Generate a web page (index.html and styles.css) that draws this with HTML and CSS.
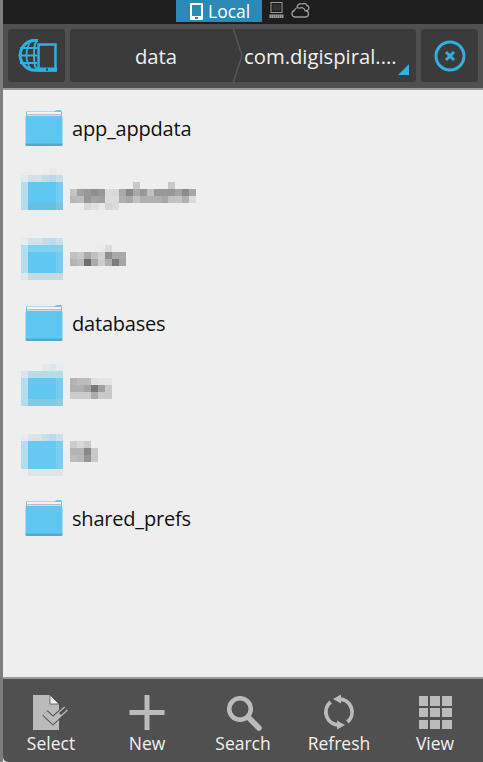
FILE: index.html
```html
<!DOCTYPE html>
<html lang="en">
<head>
<meta charset="utf-8">
<title>Local files</title>
<link rel="stylesheet" href="styles.css">
</head>
<body>
<svg class="defs" width="0" height="0">
  <symbol id="folder" viewBox="0 0 42 65">
    <path d="M5 17h30l2-1.500 2 .5 2 1v6H5z" fill="#7cc9ea"/>
    <path d="M5 14.500h28l3-1.500h4l1 2v6H5z" fill="#6cc6ee"/>
    <path d="M6 15h34v4H6z" fill="#f4f4f4"/>
    <path d="M6 17h34v1.500H6z" fill="#bdbdbd"/>
    <path d="M4.500 19.500h36.500l.5 1V47l-.5 1H5l-.5-1z" fill="#5fc8f2"/>
    <path d="M4.500 46.500h37V48l-.5 1H5l-.5-1z" fill="#5aa6c8"/>
  </symbol>
</svg>
<div class="app">
  <div class="status">
    <div class="tab">
      <svg class="tab-icon" width="13" height="17" viewBox="0 0 13 17"><path d="M1 0h11a1 1 0 0 1 1 1v15a1 1 0 0 1-1 1H1a1 1 0 0 1-1-1V1a1 1 0 0 1 1-1zM2 2v11h9V2z" fill="#fff" fill-rule="evenodd"/><rect x="5" y="14" width="3" height="2" fill="#2a8ab5"/></svg>
      <span>Local</span>
    </div>
    <svg class="st-pc" width="15" height="17" viewBox="0 0 15 17" fill="none" stroke="#999"><rect x="2" y=".5" width="11" height="10" stroke-width="1"/><path d="M3.500 2.500h8v6h-8z" fill="#333" stroke="none"/><path d="M.5 12.500h14v3.500H.5z" fill="#999" stroke="none"/><path d="M2 14h11M2 15h11" stroke="#333" stroke-width=".5" stroke-dasharray="1 1"/></svg>
    <svg class="st-cloud" width="19" height="16" viewBox="0 0 19 16" fill="none" stroke="#999" stroke-width="1.300"><path d="M4 15a3.300 3.300 0 0 1-.5-6.500C4 6 6.500 5 8.500 6.300 10 5 13.500 5.500 14 8.500a3.300 3.300 0 0 1 1 6.500z"/><path d="M6 5c.5-2.500 3-4 5.500-3 1.500-1 4-.5 4.500 1.500 2 .5 2.500 3 1 4.500-.5.500-1.500 1-2.500 1"/></svg>
  </div>
  <header class="toolbar">
    <div class="cell">
      <svg width="40" height="33" viewBox="0 0 40 33" fill="none" stroke="#2fb0e0" stroke-width="1.800">
        <path d="M21 1.500A15 15 0 1 0 21 31" stroke-width="3"/>
        <path d="M14 2c-6 7-6 21 0 28M21 2c-3 0-4 4-4 14s1 14 4 14M3 9h17M1.500 16.500H20M3 24h17"/>
        <rect x="21.500" y="5.500" width="17" height="26" fill="#3b3b3b" stroke-width="2.500"/>
        <rect x="20" y="28.500" width="20" height="4" fill="#2fb0e0" stroke="none"/>
        <rect x="29" y="29.500" width="2" height="2" fill="#333" stroke="none"/>
      </svg>
    </div>
    <div class="crumbs">
      <span class="crumb-a">data</span>
      <svg class="chev" width="11" height="55" viewBox="0 0 11 55" fill="none" stroke="#565656" stroke-width="1.500"><path d="M1 0l9 27.500L1 55"/></svg>
      <span class="crumb-b">com.digispiral....</span>
      <span class="corner"></span>
    </div>
    <div class="cell">
      <svg width="32" height="32" viewBox="0 0 32 32" fill="none" stroke="#2fb0e0"><circle cx="16" cy="16" r="14" stroke-width="3"/><path d="M12 12l8 8M20 12l-8 8" stroke-width="3"/></svg>
    </div>
  </header>
  <main class="list">
    <div class="row"><svg class="ficon" width="42" height="65"><use href="#folder"/></svg><span class="name">app_appdata</span></div>
    <div class="row">
      <svg class="mosaic" width="175" height="65" viewBox="21 162 175 65" shape-rendering="crispEdges">
        <rect x="42" y="168" width="7" height="7" fill="#ececec"/><rect x="49" y="168" width="7" height="7" fill="#e8e8e8"/><rect x="56" y="168" width="7" height="7" fill="#ececec"/>
        <rect x="21" y="175" width="7" height="7" fill="#dcebf0"/><rect x="28" y="175" width="7" height="7" fill="#cfe0e8"/><rect x="35" y="175" width="7" height="7" fill="#d2e2ea"/><rect x="42" y="175" width="7" height="7" fill="#c2dde8"/><rect x="49" y="175" width="7" height="7" fill="#b4dbec"/><rect x="56" y="175" width="7" height="7" fill="#c4dfe8"/>
        <rect x="21" y="182" width="7" height="28" fill="#b2dded"/><rect x="28" y="182" width="28" height="21" fill="#5fc8f2"/><rect x="56" y="182" width="7" height="21" fill="#78ccf0"/>
        <rect x="28" y="203" width="28" height="7" fill="#66c0e4"/><rect x="56" y="203" width="7" height="7" fill="#7cc4e2"/>
        <rect x="133" y="182" width="7" height="7" fill="#c8c8c8"/><rect x="168" y="182" width="7" height="7" fill="#c8c8c8"/>
        <rect x="70" y="189" width="7" height="7" fill="#c4c4c4"/><rect x="77" y="189" width="7" height="7" fill="#a0a0a0"/><rect x="84" y="189" width="7" height="7" fill="#989898"/><rect x="91" y="189" width="7" height="7" fill="#909090"/><rect x="98" y="189" width="7" height="7" fill="#989898"/><rect x="105" y="189" width="7" height="7" fill="#dcdcdc"/><rect x="112" y="189" width="7" height="7" fill="#d8d8d8"/><rect x="119" y="189" width="7" height="7" fill="#a8a8a8"/><rect x="126" y="189" width="7" height="7" fill="#888"/><rect x="133" y="189" width="7" height="7" fill="#a8a8a8"/><rect x="140" y="189" width="7" height="7" fill="#989898"/><rect x="147" y="189" width="7" height="7" fill="#c0c0c0"/><rect x="154" y="189" width="21" height="7" fill="#989898"/><rect x="175" y="189" width="7" height="7" fill="#a4a4a4"/><rect x="182" y="189" width="7" height="7" fill="#8c8c8c"/><rect x="189" y="189" width="7" height="7" fill="#a8a8a8"/>
        <rect x="70" y="196" width="7" height="7" fill="#b8b8b8"/><rect x="77" y="196" width="7" height="7" fill="#bcbcbc"/><rect x="84" y="196" width="7" height="7" fill="#989898"/><rect x="91" y="196" width="7" height="7" fill="#a4a4a4"/><rect x="98" y="196" width="7" height="7" fill="#a0a0a0"/><rect x="105" y="196" width="14" height="7" fill="#dcdcdc"/><rect x="119" y="196" width="7" height="7" fill="#b0b0b0"/><rect x="126" y="196" width="7" height="7" fill="#a8a8a8"/><rect x="133" y="196" width="7" height="7" fill="#c0c0c0"/><rect x="140" y="196" width="21" height="7" fill="#b0b0b0"/><rect x="161" y="196" width="7" height="7" fill="#a8a8a8"/><rect x="168" y="196" width="7" height="7" fill="#c0c0c0"/><rect x="175" y="196" width="7" height="7" fill="#c4c4c4"/><rect x="182" y="196" width="7" height="7" fill="#b0b0b0"/><rect x="189" y="196" width="7" height="7" fill="#dcdcdc"/>
        <rect x="84" y="203" width="7" height="7" fill="#d8d8d8"/><rect x="91" y="203" width="7" height="7" fill="#e0e0e0"/><rect x="98" y="203" width="7" height="7" fill="#e8e8e8"/><rect x="105" y="203" width="7" height="7" fill="#d4d4d4"/><rect x="112" y="203" width="7" height="7" fill="#dcdcdc"/>
      </svg>
    </div>
    <div class="row">
      <svg class="mosaic" width="175" height="65" viewBox="21 227 175 65" shape-rendering="crispEdges">
        <rect x="21" y="238" width="7" height="7" fill="#e4ecf0"/><rect x="28" y="238" width="14" height="7" fill="#d2e2ea"/><rect x="42" y="238" width="7" height="7" fill="#c4dfe8"/><rect x="49" y="238" width="7" height="7" fill="#b8dcec"/><rect x="56" y="238" width="7" height="7" fill="#c8e0e8"/>
        <rect x="21" y="245" width="7" height="28" fill="#b2dded"/><rect x="28" y="245" width="28" height="7" fill="#84cfee"/><rect x="56" y="245" width="7" height="7" fill="#88d0ee"/>
        <rect x="28" y="252" width="28" height="21" fill="#5fc8f2"/><rect x="56" y="252" width="7" height="21" fill="#78ccf0"/>
        <rect x="21" y="273" width="7" height="7" fill="#e0e8ec"/><rect x="28" y="273" width="35" height="7" fill="#c6d8e0"/>
        <rect x="98" y="245" width="7" height="7" fill="#ececec"/><rect x="105" y="245" width="7" height="7" fill="#dcdcdc"/>
        <rect x="70" y="252" width="7" height="7" fill="#c2c2c2"/><rect x="77" y="252" width="7" height="7" fill="#c8c8c8"/><rect x="84" y="252" width="7" height="7" fill="#aaa"/><rect x="91" y="252" width="7" height="7" fill="#c0c0c0"/><rect x="98" y="252" width="7" height="7" fill="#d0d0d0"/><rect x="105" y="252" width="7" height="7" fill="#909090"/><rect x="112" y="252" width="7" height="7" fill="#aaa"/><rect x="119" y="252" width="7" height="7" fill="#a8a8a8"/>
        <rect x="70" y="259" width="7" height="7" fill="#b4b4b4"/><rect x="77" y="259" width="7" height="7" fill="#bcbcbc"/><rect x="84" y="259" width="7" height="7" fill="#6e6e6e"/><rect x="91" y="259" width="7" height="7" fill="#aaa"/><rect x="98" y="259" width="7" height="7" fill="#ccc"/><rect x="105" y="259" width="7" height="7" fill="#b0b0b0"/><rect x="112" y="259" width="7" height="7" fill="#7c7c7c"/><rect x="119" y="259" width="7" height="7" fill="#a4a4a4"/>
      </svg>
    </div>
    <div class="row"><svg class="ficon" width="42" height="65"><use href="#folder"/></svg><span class="name">databases</span></div>
    <div class="row">
      <svg class="mosaic" width="175" height="65" viewBox="21 357 175 65" shape-rendering="crispEdges">
        <rect x="42" y="364" width="7" height="7" fill="#e2eaee"/><rect x="49" y="364" width="7" height="7" fill="#d8e6ee"/><rect x="56" y="364" width="7" height="7" fill="#e6ecf0"/>
        <rect x="21" y="371" width="7" height="7" fill="#d6e6ee"/><rect x="28" y="371" width="35" height="7" fill="#b6dcea"/>
        <rect x="21" y="378" width="7" height="28" fill="#b2dded"/><rect x="28" y="378" width="28" height="21" fill="#62c8f2"/><rect x="56" y="378" width="7" height="21" fill="#78ccf0"/>
        <rect x="28" y="399" width="28" height="7" fill="#84c8e6"/><rect x="56" y="399" width="7" height="7" fill="#90cae4"/>
        <rect x="70" y="378" width="7" height="7" fill="#b4b4b4"/><rect x="77" y="378" width="14" height="7" fill="#bcbcbc"/><rect x="91" y="378" width="7" height="7" fill="#e0e0e0"/><rect x="98" y="378" width="14" height="7" fill="#e4e4e4"/>
        <rect x="70" y="385" width="14" height="7" fill="#b0b0b0"/><rect x="84" y="385" width="7" height="7" fill="#a4a4a4"/><rect x="91" y="385" width="7" height="7" fill="#787878"/><rect x="98" y="385" width="7" height="7" fill="#a0a0a0"/><rect x="105" y="385" width="7" height="7" fill="#c8c8c8"/>
        <rect x="70" y="392" width="21" height="7" fill="#ccc"/><rect x="91" y="392" width="7" height="7" fill="#acacac"/><rect x="98" y="392" width="14" height="7" fill="#c8c8c8"/>
      </svg>
    </div>
    <div class="row">
      <svg class="mosaic" width="175" height="65" viewBox="21 422 175 65" shape-rendering="crispEdges">
        <rect x="21" y="434" width="7" height="7" fill="#e4ecf0"/><rect x="28" y="434" width="14" height="7" fill="#d8e4ea"/><rect x="42" y="434" width="7" height="7" fill="#c8dfe8"/><rect x="49" y="434" width="7" height="7" fill="#b8dcec"/><rect x="56" y="434" width="7" height="7" fill="#cce2e8"/>
        <rect x="21" y="441" width="7" height="28" fill="#b2dded"/><rect x="28" y="441" width="28" height="28" fill="#66c9f2"/><rect x="56" y="441" width="7" height="28" fill="#7accf0"/>
        <rect x="21" y="469" width="7" height="7" fill="#eaeeee"/><rect x="28" y="469" width="35" height="7" fill="#e0e4e6"/>
        <rect x="70" y="441" width="7" height="7" fill="#ccc"/><rect x="77" y="441" width="7" height="7" fill="#d8d8d8"/><rect x="84" y="441" width="7" height="7" fill="#ccc"/>
        <rect x="70" y="448" width="14" height="7" fill="#b4b4b4"/><rect x="84" y="448" width="7" height="7" fill="#888"/><rect x="91" y="448" width="7" height="7" fill="#c8c8c8"/>
        <rect x="70" y="455" width="7" height="7" fill="#bcbcbc"/><rect x="77" y="455" width="7" height="7" fill="#b8b8b8"/><rect x="84" y="455" width="7" height="7" fill="#949494"/><rect x="91" y="455" width="7" height="7" fill="#c8c8c8"/>
      </svg>
    </div>
    <div class="row"><svg class="ficon" width="42" height="65"><use href="#folder"/></svg><span class="name">shared_prefs</span></div>
  </main>
  <footer class="actions">
    <div class="action">
      <svg width="44" height="38" viewBox="0 0 44 38" fill="none"><path d="M4 1h17l9 9v26H4z" fill="#bbb"/><path d="M21 1l9 9h-9z" fill="#f2f2f2" stroke="#505050" stroke-width=".8"/><path d="M16 19l8 7.500 13-12" stroke="#505050" stroke-width="7.500"/><path d="M16 19l8 7.500 13-12" stroke="#bbb" stroke-width="5.500"/><path d="M31 20l6-5.500" stroke="#505050" stroke-width="3"/></svg>
      <span>Select</span>
    </div>
    <div class="action">
      <svg width="44" height="38" viewBox="0 0 44 38"><path d="M20 1h5v15h15v5H25v15h-5V21H5v-5h15z" fill="#bbb" transform="translate(-.5 0)"/></svg>
      <span>New</span>
    </div>
    <div class="action">
      <svg width="44" height="38" viewBox="0 0 44 38" fill="none" stroke="#bbb"><circle cx="19" cy="15" r="10.750" stroke-width="4.500"/><path d="M27 23l11 11" stroke-width="5.500" stroke-linecap="round"/></svg>
      <span>Search</span>
    </div>
    <div class="action">
      <svg width="44" height="38" viewBox="0 0 44 38" fill="none" stroke="#bbb" stroke-width="3.800"><path d="M22 5A13 13 0 0 1 30.400 28"/><path d="M22 31A13 13 0 0 1 13.600 8"/><path d="M16 5l8-4.500v9zM28 31l-8-4.500v9z" fill="#bbb" stroke="none"/></svg>
      <span>Refresh</span>
    </div>
    <div class="action">
      <div class="grid"><i></i><i></i><i></i><i></i><i></i><i></i><i></i><i></i><i></i></div>
      <span>View</span>
    </div>
  </footer>
</div>
</body>
</html>
```

FILE: styles.css
```css
* { box-sizing: border-box; }
html, body { margin: 0; padding: 0; height: 100%; overflow: hidden; }
body { background: #eee; font-family: "Open Sans", "Noto Sans", sans-serif; }
.defs { position: absolute; }
.app { height: 762px; display: flex; flex-direction: column; border-left: 3px solid #7d7d7d; background: #eee; }
.status { height: 24px; flex: none; background: #1e1e1e; display: flex; align-items: flex-start; padding-left: 173px; }
.tab { width: 86px; height: 22px; background: #2a8ab5; color: #fff; display: flex; align-items: center; padding-left: 14px; gap: 5px; font-size: 17.500px; line-height: 22px; }
.st-pc { margin: 2px 0 0 7px; }
.st-cloud { margin: 2px 0 0 7px; }
.toolbar { height: 66px; flex: none; display: flex; gap: 5px; padding: 5px 5px 6px; background: #505050; border-bottom: 2px solid #9a9a9a; }
.cell { width: 57px; background: #3b3b3b; border-radius: 3px; display: flex; align-items: center; justify-content: center; }
.crumbs { flex: 1; background: #3b3b3b; border-radius: 3px; display: flex; align-items: center; color: #f0f0f0; font-size: 20.250px; position: relative; }
.crumb-a { width: 162px; padding-left: 10px; text-align: center; }
.chev { flex: none; }
.crumb-b { white-space: nowrap; margin-left: 1px; }
.corner { position: absolute; right: 7px; bottom: 7px; width: 0; height: 0; border-style: solid; border-width: 0 0 11px 11px; border-color: transparent transparent #2fb0e0 transparent; }
.list { flex: 1; padding: 7px 0 0 18px; }
.row { height: 65px; display: flex; align-items: center; gap: 9px; }
.ficon, .mosaic { flex: none; }
.name { font-size: 20px; letter-spacing: -.2px; color: #111; margin-top: -2px; }
.actions { height: 85px; flex: none; display: flex; padding: 15px 0 0; background: #505050; border-top: 2px solid #9a9a9a; border-bottom-left-radius: 5px; }
.action { flex: 1; display: flex; flex-direction: column; align-items: center; color: #f0f0f0; font-size: 17.500px; line-height: 24px; }
.action svg { display: block; flex: none; }
.action span { margin-top: -1px; }
.grid { width: 33px; height: 38px; padding: 2px 0 3px; display: grid; grid-template-columns: repeat(3, 9.500px); grid-template-rows: repeat(3, 9.500px); gap: 2.250px; justify-content: center; }
.grid i { display: block; background: #bbb; }
```
